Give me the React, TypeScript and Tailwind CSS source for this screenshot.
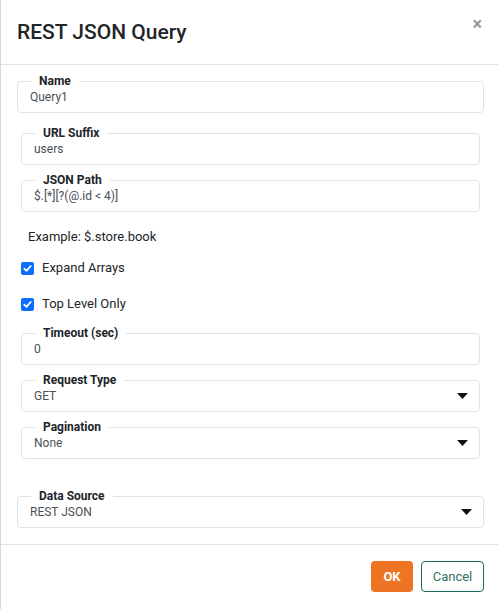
import React from "react";

const font = { fontFamily: "Roboto, 'Liberation Sans', sans-serif" };

function Caret() {
  return (
    <svg width="11" height="6" viewBox="0 0 11 6" className="shrink-0">
      <path d="M0 0 L11 0 L5.5 6 Z" fill="#111" />
    </svg>
  );
}

function Field({ label, value, select }: { label: string; value: string; select?: boolean }) {
  return (
    <fieldset className="border border-[#dfe2e6] rounded-[4px] pb-[7px]">
      <legend className="ml-[13px] px-[8px] text-[12px] leading-[16px] font-bold text-[#212529]">{label}</legend>
      <div className="flex items-center justify-between pl-[12px] pr-[11px] text-[12px] leading-[16px] text-[#495057]">
        <span>{value}</span>
        {select && <Caret />}
      </div>
    </fieldset>
  );
}

function Check({ label }: { label: string }) {
  return (
    <div className="flex items-center h-[20px]">
      <div className="w-[13px] h-[13px] rounded-[2px] bg-[#0d6efd] flex items-center justify-center">
        <svg width="9" height="9" viewBox="0 0 9 9">
          <path d="M1.3 4.7 L3.5 6.8 L7.7 2" stroke="#fff" strokeWidth="1.8" fill="none" strokeLinecap="round" strokeLinejoin="round" />
        </svg>
      </div>
      <span className="ml-[8px] text-[13px] text-[#212529]">{label}</span>
    </div>
  );
}

export default function App() {
  return (
    <div className="w-[498px] h-[609px] bg-white border-l border-[#d6d6d6] flex flex-col" style={font}>
      <div className="h-[65px] border-b border-[#dee2e6] flex items-center justify-between pl-[16px] pr-[16px] shrink-0">
        <h1 className="text-[21px] font-medium text-[#212529] leading-[24px] mt-[0px]">REST JSON Query</h1>
        <span className="text-[18px] font-bold text-[#999] leading-[18px] mt-[-16px]">×</span>
      </div>
      <div className="flex-1 pl-[16px] pr-[14px] pt-[8px]">
        <Field label="Name" value="Query1" />
        <div className="px-[4px] mt-[12px] flex flex-col">
          <Field label="URL Suffix" value="users" />
          <div className="mt-[7px]">
            <Field label="JSON Path" value="$.[*][?(@.id < 4)]" />
          </div>
          <div className="mt-[17px] pl-[7px] text-[13px] leading-[16px] text-[#212529]">Example: $.store.book</div>
          <div className="mt-[13px]">
            <Check label="Expand Arrays" />
          </div>
          <div className="mt-[16px]">
            <Check label="Top Level Only" />
          </div>
          <div className="mt-[11px]">
            <Field label="Timeout (sec)" value="0" />
          </div>
          <div className="mt-[7px]">
            <Field label="Request Type" value="GET" select />
          </div>
          <div className="mt-[7px]">
            <Field label="Pagination" value="None" select />
          </div>
        </div>
        <div className="mt-[29px]">
          <Field label="Data Source" value="REST JSON" select />
        </div>
      </div>
      <div className="h-[65px] border-t border-[#dee2e6] flex items-start justify-end gap-[8px] pt-[16px] pr-[14px] shrink-0">
        <button className="w-[42px] h-[31px] rounded-[4px] bg-[#ee7322] text-white text-[13px] font-bold">OK</button>
        <button className="w-[63px] h-[31px] rounded-[4px] border border-[#1d6b60] text-[#2f6f66] text-[13px]">Cancel</button>
      </div>
    </div>
  );
}
